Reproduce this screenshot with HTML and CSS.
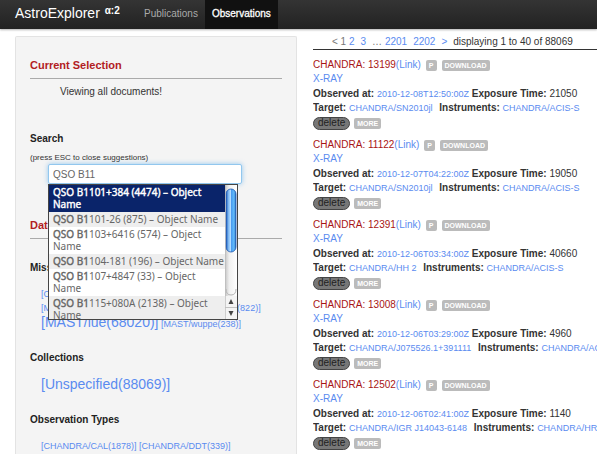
FILE: index.html
```html
<!DOCTYPE html>
<html lang="en">
<head>
<meta charset="utf-8">
<title>AstroExplorer</title>
<link rel="stylesheet" href="styles.css">
</head>
<body>
<header class="topbar">
  <a class="brand" href="#">AstroExplorer <sup>α:2</sup></a>
  <nav class="nav">
    <a class="nav-link" href="#">Publications</a>
    <a class="nav-link current" href="#">Observations</a>
  </nav>
</header>
<div class="layout">
  <aside class="sidebar">
    <h2 class="section-title">Current Selection</h2>
    <p class="selection">Viewing all documents!</p>
    <h3 class="facet-title"><label for="query">Search</label></h3>
    <p class="hint">(press ESC to close suggestions)</p>
    <div class="search">
      <input id="query" class="query" type="text" value="QSO B11" autocomplete="off" autofocus>
      <div class="suggest">
        <ul class="suggest-list">
          <li class="active">QSO B1101+384 (4474) – Object Name</li>
          <li><b>QSO B1</b>101-26 (875) – Object Name</li>
          <li><b>QSO B1</b>103+6416 (574) – Object Name</li>
          <li><b>QSO B1</b>104-181 (196) – Object Name</li>
          <li><b>QSO B1</b>107+4847 (33) – Object Name</li>
          <li><b>QSO B1</b>115+080A (2138) – Object Name</li>
        </ul>
        <svg class="scroller" viewBox="0 0 12 134" aria-hidden="true">
          <defs>
            <linearGradient id="track"><stop offset="0" stop-color="#c4c4c4"/><stop offset=".35" stop-color="#f0f0f0"/><stop offset="1" stop-color="#fff"/></linearGradient>
            <linearGradient id="thumb"><stop offset="0" stop-color="#1c58b8"/><stop offset=".25" stop-color="#7fb9f2"/><stop offset=".45" stop-color="#b4dcff"/><stop offset=".55" stop-color="#4a9cf0"/><stop offset=".8" stop-color="#62bdfb"/><stop offset="1" stop-color="#2460b4"/></linearGradient>
          </defs>
          <rect width="12" height="134" fill="url(#track)"/>
          <path d="M1 104Q1 110 6 110Q11 110 11 104" fill="none" stroke="#b5b5b5"/>
          <rect x="1" y="4" width="10" height="63" rx="5" fill="url(#thumb)" stroke="#1d57ae" stroke-width=".8"/>
          <path d="M0 111H12V134H0z" fill="#f4f4f4"/>
          <path d="M0 122.5H12" stroke="#c2c2c2"/>
          <path d="M6 114L8.500 119H3.500zM6 131L8.500 126H3.500z" fill="#444"/>
          <path d="M.5 0V134" stroke="#bbb" stroke-width=".7"/>
        </svg>
      </div>
    </div>
    <h2 class="section-title data-title">Data</h2>
    <h3 class="facet-title">Missions</h3>
    <p class="tags"><a href="#">[CHANDRA(13014)]</a><br>
      <a href="#">[MAST/euve(1410)]</a> <a href="#">[MAST/fuse(823)]</a> <a href="#">[MAST/hut(822)]</a><br>
      <a class="big" href="#">[MAST/iue(68020)]</a> <a href="#">[MAST/wuppe(238)]</a></p>
    <h3 class="facet-title">Collections</h3>
    <p class="tags"><a class="big" href="#">[Unspecified(88069)]</a></p>
    <h3 class="facet-title">Observation Types</h3>
    <p class="tags"><a href="#">[CHANDRA/CAL(1878)]</a> <a href="#">[CHANDRA/DDT(339)]</a></p>
  </aside>
  <main class="results">
    <div class="pager">
      <span class="muted">&lt; 1 <a href="#">2</a></span>
      <a href="#">3</a>
      <span class="muted">… <a href="#">2201</a></span><a href="#">2202</a><a href="#">&gt;</a>
      <span>displaying 1 to 40 of 88069</span>
    </div>
    <article class="record">
      <div class="line head"><span><span class="name">CHANDRA: 13199</span><a href="#">(Link)</a></span><button class="badge">P</button><button class="badge">DOWNLOAD</button></div>
      <div class="line"><a href="#">X-RAY</a></div>
      <div class="line facts"><b>Observed at:</b> <a class="value" href="#">2010-12-08T12:50:00Z</a> <b>Exposure Time:</b> 21050</div>
      <div class="line"><b>Target:</b> <a class="value" href="#">CHANDRA/SN2010jl</a> <b class="instr">Instruments:</b> <a class="value" href="#">CHANDRA/ACIS-S</a></div>
      <div class="actions"><button class="delete">delete</button><button class="badge">MORE</button></div>
    </article>
    <article class="record">
      <div class="line head"><span><span class="name">CHANDRA: 11122</span><a href="#">(Link)</a></span><button class="badge">P</button><button class="badge">DOWNLOAD</button></div>
      <div class="line"><a href="#">X-RAY</a></div>
      <div class="line facts"><b>Observed at:</b> <a class="value" href="#">2010-12-07T04:22:00Z</a> <b>Exposure Time:</b> 19050</div>
      <div class="line"><b>Target:</b> <a class="value" href="#">CHANDRA/SN2010jl</a> <b class="instr">Instruments:</b> <a class="value" href="#">CHANDRA/ACIS-S</a></div>
      <div class="actions"><button class="delete">delete</button><button class="badge">MORE</button></div>
    </article>
    <article class="record">
      <div class="line head"><span><span class="name">CHANDRA: 12391</span><a href="#">(Link)</a></span><button class="badge">P</button><button class="badge">DOWNLOAD</button></div>
      <div class="line"><a href="#">X-RAY</a></div>
      <div class="line facts"><b>Observed at:</b> <a class="value" href="#">2010-12-06T03:34:00Z</a> <b>Exposure Time:</b> 40660</div>
      <div class="line"><b>Target:</b> <a class="value" href="#">CHANDRA/HH 2</a> <b class="instr">Instruments:</b> <a class="value" href="#">CHANDRA/ACIS-S</a></div>
      <div class="actions"><button class="delete">delete</button><button class="badge">MORE</button></div>
    </article>
    <article class="record">
      <div class="line head"><span><span class="name">CHANDRA: 13008</span><a href="#">(Link)</a></span><button class="badge">P</button><button class="badge">DOWNLOAD</button></div>
      <div class="line"><a href="#">X-RAY</a></div>
      <div class="line facts"><b>Observed at:</b> <a class="value" href="#">2010-12-06T03:29:00Z</a> <b>Exposure Time:</b> 4960</div>
      <div class="line"><b>Target:</b> <a class="value" href="#">CHANDRA/J075526.1+391111</a> <b class="instr">Instruments:</b> <a class="value" href="#">CHANDRA/ACIS-S</a></div>
      <div class="actions"><button class="delete">delete</button><button class="badge">MORE</button></div>
    </article>
    <article class="record">
      <div class="line head"><span><span class="name">CHANDRA: 12502</span><a href="#">(Link)</a></span><button class="badge">P</button><button class="badge">DOWNLOAD</button></div>
      <div class="line"><a href="#">X-RAY</a></div>
      <div class="line facts"><b>Observed at:</b> <a class="value" href="#">2010-12-06T02:41:00Z</a> <b>Exposure Time:</b> 1140</div>
      <div class="line"><b>Target:</b> <a class="value" href="#">CHANDRA/IGR J14043-6148</a> <b class="instr">Instruments:</b> <a class="value" href="#">CHANDRA/HRC-I</a></div>
      <div class="actions"><button class="delete">delete</button><button class="badge">MORE</button></div>
    </article>
  </main>
</div>
</body>
</html>
```
FILE: styles.css
```css
* { box-sizing: border-box; }
html { overflow: hidden; }
body {
  margin: 0;
  background: #fff;
  color: #333;
  font: 10px/14px "Liberation Sans", Arial, sans-serif;
}
a { color: #5a8bf0; text-decoration: none; }
h2, h3, p, ul { margin: 0; padding: 0; }
button { font-family: inherit; border: 0; cursor: pointer; }

.topbar {
  display: flex;
  height: 29px;
  padding-left: 15px;
  background: linear-gradient(#343434, #222);
  box-shadow: 0 1px 2px rgba(0, 0, 0, .3);
}
.brand { color: #fff; font-size: 14px; line-height: 26px; width: 122px; white-space: nowrap; }
.brand sup { font-size: 10px; font-weight: bold; line-height: 0; margin-left: 1px; vertical-align: 4px; }
.nav { display: flex; }
.nav-link { padding: 0 7px; color: #aaa; line-height: 27px; }
.nav-link.current { background: #111; color: #fff; -webkit-text-stroke: .3px #fff; }

.layout {
  display: grid;
  grid-template-columns: minmax(0, 282fr) minmax(0, 284fr);
  gap: 16px;
  min-height: calc(100vh - 29px);
  padding-left: 15px;
}
.sidebar {
  margin-top: 7px;
  padding: 20px 14px 0;
  background: #f4f4f4;
  border: 1px solid #e3e3e3;
  border-bottom: 0;
  border-radius: 2px 2px 0 0;
}
.section-title {
  padding-bottom: 5px;
  border-bottom: 1px solid #aaa;
  color: #b2201f;
  font-size: 11px;
  line-height: 16px;
}
.selection { padding: 6px 30px 33px; }
.facet-title { font-size: 10px; line-height: 14px; color: #222; }
.hint { margin: 6px 0 0; font-size: 8px; line-height: 12px; }
.search { position: relative; width: 194px; margin: 0 0 33px 18px; }
.query {
  display: block;
  width: 100%;
  height: 20px;
  padding: 0 4px;
  border: 1px solid #92c7ee;
  border-radius: 2px;
  outline: 0;
  background: #fff;
  box-shadow: 0 0 5px rgba(82, 168, 236, .6);
  color: #666;
  font: 10px "Liberation Sans", Arial, sans-serif;
}
.suggest {
  position: absolute;
  top: 100%;
  left: 0;
  display: flex;
  width: 190px;
  height: 136px;
  overflow: hidden;
  border: 1px solid #444;
  background: #fff;
}
.suggest-list { flex: 1; list-style: none; }
.suggest-list li {
  padding: 1px 0 2px 4px;
  color: #666;
  font: 10px/12px "Noto Sans", sans-serif;
}
.suggest-list b { font-weight: normal; -webkit-text-stroke: .4px; }
.suggest-list li:nth-child(even) { background: #eee; }
.suggest-list li.active { background: #0a246a; color: #fff; -webkit-text-stroke: .4px; }
.scroller { flex: none; width: 12px; height: 134px; }
.data-title { margin-bottom: 22px; }
.tags { padding: 12px 0 20px 11px; font-size: 9px; white-space: nowrap; }
.tags:last-child { padding-bottom: 0; }
.tags .big { font-size: 14px; }

.results { padding-top: 6px; overflow: hidden; white-space: nowrap; }
.pager {
  display: flex;
  gap: 6px;
  padding-left: 19px;
  border-bottom: 1px solid #333;
  margin-bottom: 8px;
}
.muted { color: #777; }
.record { margin-bottom: 7px; }
.record:last-child { margin-bottom: 0; }
.name { color: #a81414; }
.head { display: flex; align-items: center; gap: 5px; }
.facts { margin-top: 1px; }
.value { font-size: 9px; }
.instr { margin-left: 4px; }
.badge {
  height: 11px;
  padding: 0 3px;
  border-radius: 2px;
  background: #bbb;
  color: #fff;
  font-size: 7px;
  font-weight: bold;
  line-height: 11px;
}
.actions { display: flex; align-items: center; gap: 4px; height: 16px; }
.delete {
  height: 13px;
  padding: 0 4px;
  border: 1px solid #444;
  border-radius: 7px;
  background: #777;
  color: #222;
  font-size: 10px;
  line-height: 10px;
}
```
